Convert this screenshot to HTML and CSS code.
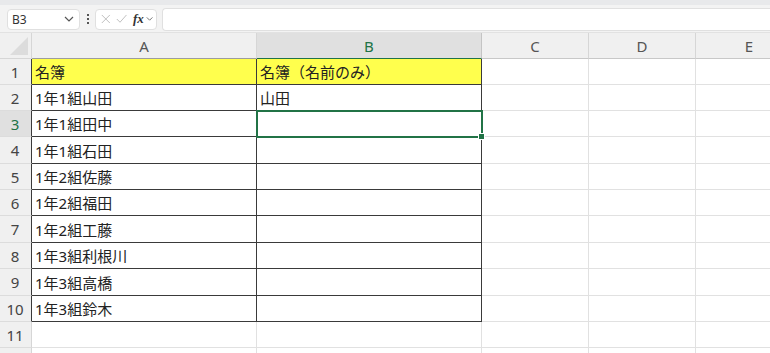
FILE: index.html
```html
<!DOCTYPE html>
<html lang="ja">
<head>
  <meta charset="UTF-8">
  <meta name="viewport" content="width=device-width, initial-scale=1.0">
  <title>Sheet1</title>
  <link rel="stylesheet" href="styles.css">
</head>
<body>
  <div class="app">
    <div class="toolbar">
      <div class="name-box">
        <span>B3</span>
        <svg class="chev" width="10" height="6" viewBox="0 0 10 6"><path d="M1 1l4 4 4-4" fill="none" stroke="#555" stroke-width="1.2"/></svg>
      </div>
      <div class="grip">
        <span></span><span></span><span></span>
      </div>
      <div class="fx-box">
        <svg width="12" height="12" viewBox="0 0 12 12"><path d="M1 1l10 10M11 1L1 11" stroke="#b8b8b8" stroke-width="1.1"/></svg>
        <svg width="14" height="12" viewBox="0 0 14 12"><path d="M1 6l4 4 8-9" fill="none" stroke="#b8b8b8" stroke-width="1.1"/></svg>
        <span class="fx">fx</span>
        <svg class="chev" width="9" height="6" viewBox="0 0 9 6"><path d="M1 1l3.5 3.5L8 1" fill="none" stroke="#666" stroke-width="1.1"/></svg>
      </div>
      <div class="formula"></div>
    </div>

    <div class="sheet">
      <!-- header row -->
      <div class="corner"><span class="tri"></span></div>
      <div class="col-head data-top">A</div>
      <div class="col-head sel">B</div>
      <div class="col-head">C</div>
      <div class="col-head">D</div>
      <div class="col-head">E</div>

      <div class="row-head in">1</div>
      <div class="cell in hl">名簿</div>
      <div class="cell in hl">名簿（名前のみ）</div>
      <div class="cell"></div><div class="cell"></div><div class="cell"></div>

      <div class="row-head in">2</div>
      <div class="cell in">1年1組山田</div>
      <div class="cell in">山田</div>
      <div class="cell"></div><div class="cell"></div><div class="cell"></div>

      <div class="row-head in sel">3</div>
      <div class="cell in">1年1組田中</div>
      <div class="cell in active"><span class="handle"></span></div>
      <div class="cell"></div><div class="cell"></div><div class="cell"></div>

      <div class="row-head in">4</div>
      <div class="cell in">1年1組石田</div>
      <div class="cell in"></div>
      <div class="cell"></div><div class="cell"></div><div class="cell"></div>

      <div class="row-head in">5</div>
      <div class="cell in">1年2組佐藤</div>
      <div class="cell in"></div>
      <div class="cell"></div><div class="cell"></div><div class="cell"></div>

      <div class="row-head in">6</div>
      <div class="cell in">1年2組福田</div>
      <div class="cell in"></div>
      <div class="cell"></div><div class="cell"></div><div class="cell"></div>

      <div class="row-head in">7</div>
      <div class="cell in">1年2組工藤</div>
      <div class="cell in"></div>
      <div class="cell"></div><div class="cell"></div><div class="cell"></div>

      <div class="row-head in">8</div>
      <div class="cell in">1年3組利根川</div>
      <div class="cell in"></div>
      <div class="cell"></div><div class="cell"></div><div class="cell"></div>

      <div class="row-head in">9</div>
      <div class="cell in">1年3組高橋</div>
      <div class="cell in"></div>
      <div class="cell"></div><div class="cell"></div><div class="cell"></div>

      <div class="row-head in">10</div>
      <div class="cell in">1年3組鈴木</div>
      <div class="cell in"></div>
      <div class="cell"></div><div class="cell"></div><div class="cell"></div>

      <div class="row-head">11</div>
      <div class="cell"></div><div class="cell"></div>
      <div class="cell"></div><div class="cell"></div><div class="cell"></div>

      <div class="row-head"></div>
      <div class="cell"></div><div class="cell"></div>
      <div class="cell"></div><div class="cell"></div><div class="cell"></div>
    </div>
  </div>
</body>
</html>
```

FILE: styles.css
```css
body {
  margin: 0;
  background: #fff;
  font-family: "Noto Sans", "Noto Sans CJK JP", sans-serif;
  color: #222;
  overflow: hidden;
}
.app {
  width: 770px;
  height: 353px;
  overflow: hidden;
}
.toolbar {
  display: flex;
  align-items: center;
  box-sizing: border-box;
  height: 33px;
  padding: 1px 0 0 7px;
  background: #f3f3f3;
  border-top: 5px solid #e8e9eb;
  border-bottom: 1px solid #e2e2e2;
}
.name-box {
  display: flex;
  align-items: center;
  justify-content: space-between;
  width: 73px;
  height: 21px;
  box-sizing: border-box;
  padding: 0 5px 0 4px;
  background: #fff;
  border: 1px solid #e0e0e0;
  border-radius: 4px;
  font-size: 12px;
  color: #333;
}
.grip {
  display: flex;
  flex-direction: column;
  gap: 2px;
  margin: 0 6px 0 7px;
}
.grip span {
  width: 2px;
  height: 2px;
  background: #555;
}
.fx-box {
  display: flex;
  align-items: center;
  gap: 5px;
  width: 62px;
  height: 21px;
  box-sizing: border-box;
  padding: 0 3px 0 5px;
  background: #fff;
  border: 1px solid #e0e0e0;
  border-radius: 4px;
}
.fx-box .fx {
  font-family: "Liberation Serif", serif;
  font-style: italic;
  font-weight: bold;
  font-size: 13px;
  color: #333;
  margin-left: 1px;
  margin-right: -3px;
}
.formula {
  flex: 1;
  height: 21px;
  margin-left: 5px;
  background: #fff;
  border: 1px solid #e0e0e0;
  border-right: none;
  border-radius: 4px 0 0 4px;
}

.sheet {
  display: grid;
  grid-template-columns: 32px 225px 225px 107px 107px 107px;
  grid-template-rows: 26px 26px 26px 26px 27px 26px 26px 27px 26px 27px 26px 26px 26px;
  background: #fff;
}
.sheet > div {
  box-sizing: border-box;
  border-right: 1px solid #e1e1e1;
  border-bottom: 1px solid #e1e1e1;
}
.corner {
  background: #f0f0f0;
  border-color: #d6d6d6 !important;
  position: relative;
  overflow: hidden;
}
.corner .tri {
  position: absolute;
  right: 3px;
  bottom: 3px;
  width: 0;
  height: 0;
  border-left: 18px solid transparent;
  border-bottom: 18px solid #dcdcdc;
}
.col-head {
  display: flex;
  align-items: center;
  justify-content: center;
  background: #f0f0f0;
  border-right-color: #d6d6d6 !important;
  border-bottom-color: #c8c8c8 !important;
  font-size: 15px;
  color: #555;
}
.col-head.data-top {
  border-bottom-color: #9d9d9d !important;
}
.col-head.sel {
  background: #e0e0e0;
  color: #217346;
  border-bottom-color: #217346 !important;
  border-right-color: #c4c4c4 !important;
}
.row-head {
  display: flex;
  align-items: center;
  justify-content: center;
  background: #f0f0f0;
  border-right-color: #d6d6d6 !important;
  border-bottom-color: #dcdcdc !important;
  font-size: 15px;
  color: #444;
  padding-right: 1px;
}
.row-head.in {
  border-right-color: #3a3a3a !important;
}
.row-head.sel {
  background: #e0e0e0;
  color: #217346;
}
.cell {
  display: flex;
  align-items: center;
  padding-left: 3px;
  font-size: 15px;
  color: #222;
  white-space: nowrap;
}
.cell.in {
  border-right-color: #3a3a3a;
  border-bottom-color: #3a3a3a;
}
.cell.hl {
  background: #ffff4d;
}
.cell.active {
  position: relative;
  outline: 2px solid #217346;
  outline-offset: -1px;
  z-index: 1;
}
.cell.active .handle {
  position: absolute;
  right: -4px;
  bottom: -4px;
  width: 5px;
  height: 5px;
  background: #217346;
  border: 1px solid #fff;
}
```
